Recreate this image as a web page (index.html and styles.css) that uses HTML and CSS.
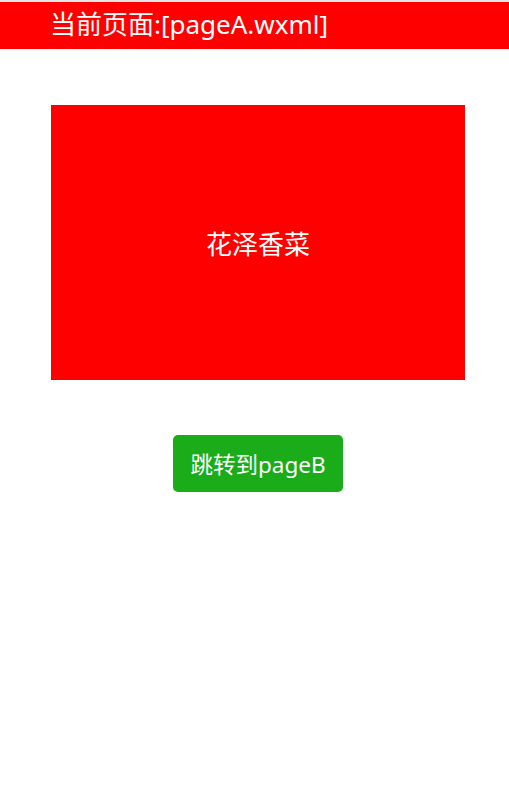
FILE: index.html
```html
<!DOCTYPE html>
<html lang="zh">
<head>
<meta charset="utf-8">
<link rel="stylesheet" href="styles.css">
</head>
<body>
<div class="topline"></div>
<div class="header">当前页面:[pageA.wxml]</div>
<div class="content">
  <div class="box">花泽香菜</div>
  <div class="actions"><button class="btn">跳转到pageB</button></div>
</div>
</body>
</html>
```
FILE: styles.css
```css
html, body {
  margin: 0;
  padding: 0;
  background: #fff;
  font-family: "Noto Sans", "Noto Sans CJK SC", sans-serif;
}
.topline {
  height: 2px;
  background: #e6e6e6;
}
.header {
  height: 47px;
  line-height: 44px;
  background: #ff0000;
  color: #fff;
  font-size: 26px;
  padding-left: 50px;
  white-space: nowrap;
}
.content {
  width: 414px;
  margin-left: 51px;
  padding-top: 56px;
}
.box {
  height: 275px;
  background: #ff0000;
  color: #fff;
  font-size: 26px;
  display: flex;
  align-items: center;
  justify-content: center;
}
.actions {
  display: flex;
  justify-content: center;
  margin-top: 55px;
}
.btn {
  width: 170px;
  height: 57px;
  background: #1aad19;
  color: #fff;
  border: none;
  border-radius: 5px;
  font-family: inherit;
  font-size: 22.5px;
  padding: 0;
}
```
